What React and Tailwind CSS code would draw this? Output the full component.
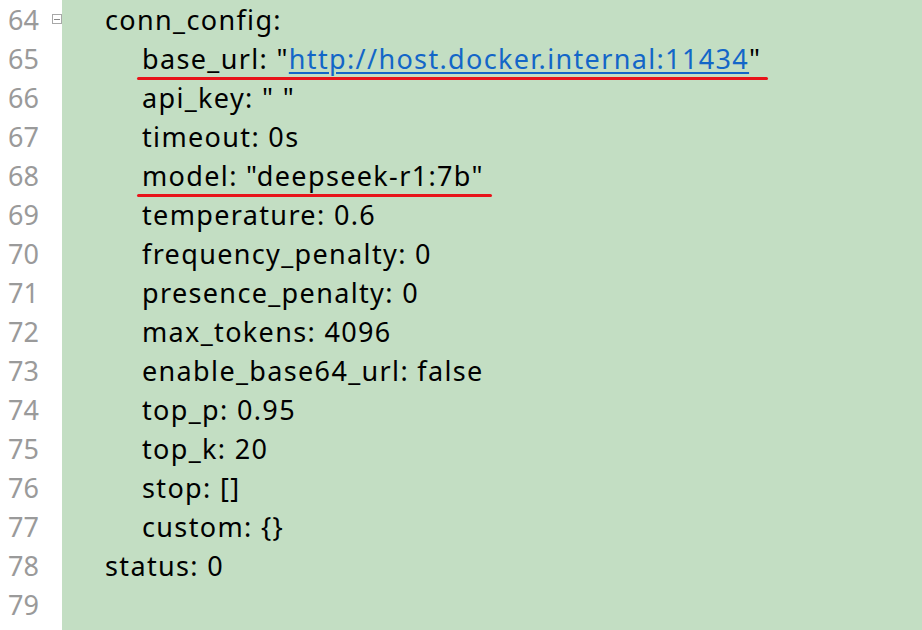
import React from 'react';

const lines = [
  { n: 64, indent: 1, text: 'conn_config:', fold: true },
  { n: 65, indent: 2, mark: 'url' },
  { n: 66, indent: 2, text: 'api_key: " "' },
  { n: 67, indent: 2, text: 'timeout: 0s' },
  { n: 68, indent: 2, mark: 'model' },
  { n: 69, indent: 2, text: 'temperature: 0.6' },
  { n: 70, indent: 2, text: 'frequency_penalty: 0' },
  { n: 71, indent: 2, text: 'presence_penalty: 0' },
  { n: 72, indent: 2, text: 'max_tokens: 4096' },
  { n: 73, indent: 2, text: 'enable_base64_url: false' },
  { n: 74, indent: 2, text: 'top_p: 0.95' },
  { n: 75, indent: 2, text: 'top_k: 20' },
  { n: 76, indent: 2, text: 'stop: []' },
  { n: 77, indent: 2, text: 'custom: {}' },
  { n: 78, indent: 1, text: 'status: 0' },
  { n: 79, indent: 0, text: '' },
];

const Underlined = ({ children, extra }) => (
  <span className="relative">
    {children}
    <span className={`absolute left-[-5px] bottom-[-3px] h-[3px] bg-[#e8141a] rounded-full ${extra}`} />
  </span>
);

const Body = ({ line }) => {
  if (line.mark === 'url') {
    return (
      <Underlined extra="right-[-7px]">
        base_url: "<span className="text-[#1366c8] underline decoration-[1.5px] underline-offset-[3px]">http://host.docker.internal:11434</span>"
      </Underlined>
    );
  }
  if (line.mark === 'model') {
    return <Underlined extra="right-[-8px]">model: "deepseek-r1:7b"</Underlined>;
  }
  return line.text;
};

export default function App() {
  return (
    <div className="w-[922px] h-[630px] overflow-hidden flex bg-white font-['Noto_Sans',sans-serif] text-[27px] leading-[39px]">
      <div className="w-[62px] shrink-0 bg-white">
        {lines.map((l) => (
          <div key={l.n} className="relative h-[39px] pl-[8px] text-[#9a9a9a]">
            {l.n}
            {l.fold && (
              <span className="absolute left-[52px] top-[14px] w-[10px] h-[10px] border border-[#a8a8a8] flex items-center justify-center bg-white">
                <span className="w-[6px] h-px bg-[#888]" />
              </span>
            )}
          </div>
        ))}
      </div>
      <div className="flex-1 bg-[#c3dec3] text-black tracking-[1.35px]">
        {lines.map((l) => (
          <div
            key={l.n}
            className={`h-[39px] whitespace-pre ${l.indent === 1 ? 'pl-[43px]' : l.indent === 2 ? 'pl-[80px]' : ''}`}
          >
            <Body line={l} />
          </div>
        ))}
      </div>
    </div>
  );
}
